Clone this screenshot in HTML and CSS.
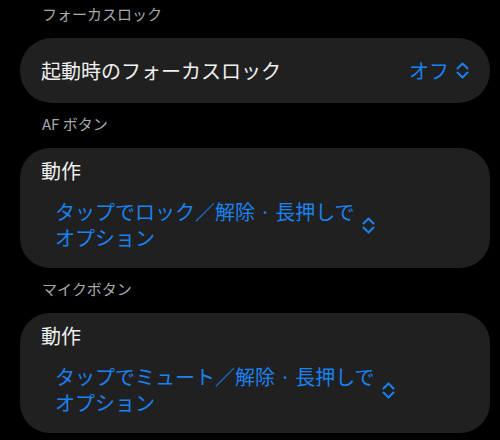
FILE: index.html
```html
<!DOCTYPE html>
<html lang="ja">
<head>
<meta charset="utf-8">
<link rel="stylesheet" href="styles.css">
</head>
<body>
<div class="page">
  <div class="section-title first">フォーカスロック</div>
  <div class="card pill">
    <div class="label">起動時のフォーカスロック</div>
    <div class="value">
      <span>オフ</span>
      <svg class="chev" viewBox="0 0 13 17" width="13" height="17"><polyline points="1.5,6.5 6.5,1.5 11.5,6.5"/><polyline points="1.5,10.5 6.5,15.5 11.5,10.5"/></svg>
    </div>
  </div>
  <div class="section-title">AF ボタン</div>
  <div class="card block">
    <div class="label">動作</div>
    <div class="option">
      <div class="option-text"><span class="line">タップでロック／解除 · 長押しで</span><span class="line">オプション</span></div>
      <svg class="chev" viewBox="0 0 13 17" width="13" height="17"><polyline points="1.5,6.5 6.5,1.5 11.5,6.5"/><polyline points="1.5,10.5 6.5,15.5 11.5,10.5"/></svg>
    </div>
  </div>
  <div class="section-title">マイクボタン</div>
  <div class="card block">
    <div class="label">動作</div>
    <div class="option">
      <div class="option-text"><span class="line">タップでミュート／解除 · 長押しで</span><span class="line">オプション</span></div>
      <svg class="chev" viewBox="0 0 13 17" width="13" height="17"><polyline points="1.5,6.5 6.5,1.5 11.5,6.5"/><polyline points="1.5,10.5 6.5,15.5 11.5,10.5"/></svg>
    </div>
  </div>
</div>
</body>
</html>
```
FILE: styles.css
```css
html, body {
  margin: 0;
  padding: 0;
  background: #000;
}
body {
  font-family: "Noto Sans CJK JP", "Noto Sans", sans-serif;
  color: #f0f0f0;
  width: 500px;
  height: 440px;
  overflow: hidden;
}
.page {
  padding: 0 10px 0 20px;
}
.section-title {
  font-size: 15px;
  line-height: 20px;
  color: #a8a8a8;
  padding: 11px 0 14px 22px;
}
.section-title.first {
  padding-top: 4px;
}
.card {
  background: #202020;
}
.card.pill {
  height: 65px;
  border-radius: 32px;
  display: flex;
  align-items: center;
  justify-content: space-between;
  padding: 0 21px 0 21px;
  box-sizing: border-box;
}
.label {
  font-size: 20px;
  line-height: 26px;
}
.value {
  display: flex;
  align-items: center;
  gap: 7px;
  color: #1a82f2;
  font-size: 20px;
  line-height: 26px;
}
.chev {
  fill: none;
  stroke: #1a82f2;
  stroke-width: 2;
  stroke-linecap: round;
  stroke-linejoin: round;
  flex: none;
}
.card.block {
  border-radius: 30px;
  padding: 10px 22px 17px 21px;
  height: 120px;
  box-sizing: border-box;
}
.option {
  display: flex;
  align-items: center;
  gap: 7px;
  margin-top: 15px;
  padding-left: 14px;
}
.option-text {
  color: #1a82f2;
  font-size: 20px;
  line-height: 26px;
}
.line {
  display: block;
  height: 26px;
}
```
